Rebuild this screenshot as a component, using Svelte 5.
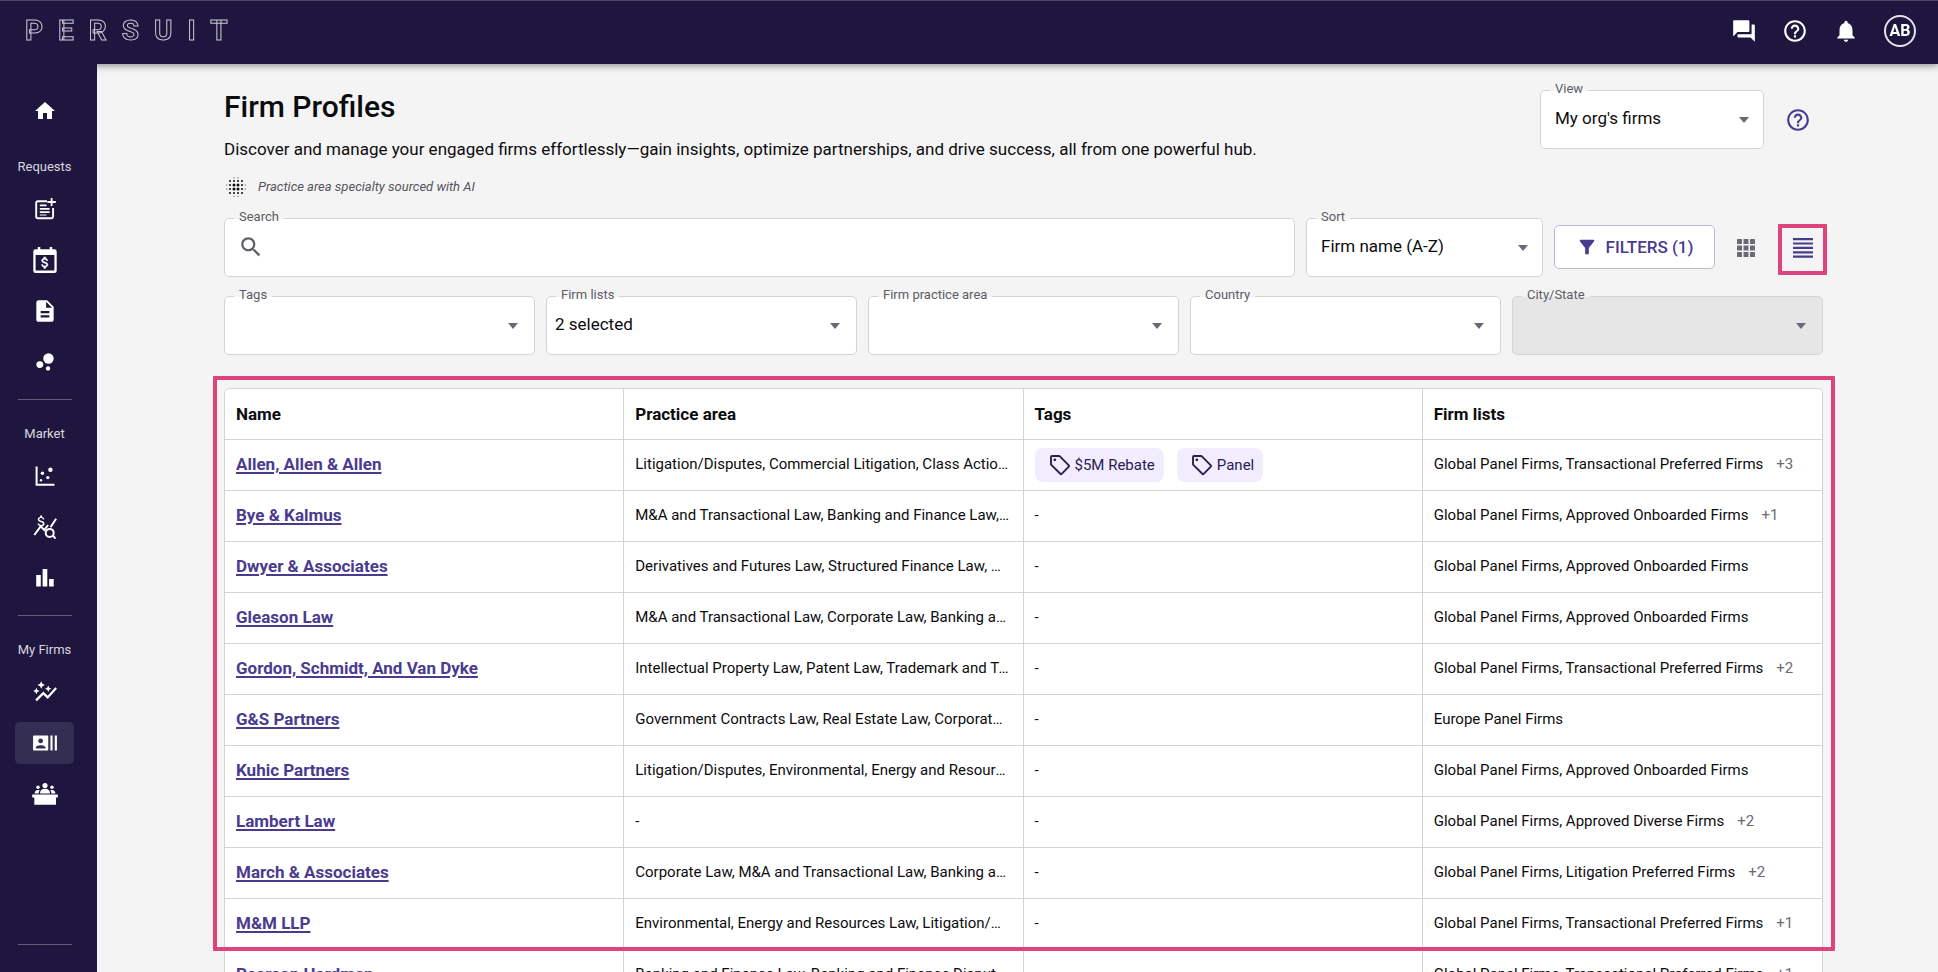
<script>
  const firms = [
    { name: 'Allen, Allen & Allen', areas: 'Litigation/Disputes, Commercial Litigation, Class Actions, Securities Litigation', tags: ['$5M Rebate', 'Panel'], lists: 'Global Panel Firms, Transactional Preferred Firms', more: 3 },
    { name: 'Bye & Kalmus', areas: 'M&A and Transactional Law, Banking and Finance Law, Corporate Law', tags: [], lists: 'Global Panel Firms, Approved Onboarded Firms', more: 1 },
    { name: 'Dwyer & Associates', areas: 'Derivatives and Futures Law, Structured Finance Law, Securities Law', tags: [], lists: 'Global Panel Firms, Approved Onboarded Firms', more: 0 },
    { name: 'Gleason Law', areas: 'M&A and Transactional Law, Corporate Law, Banking and Finance Law', tags: [], lists: 'Global Panel Firms, Approved Onboarded Firms', more: 0 },
    { name: 'Gordon, Schmidt, And Van Dyke', areas: 'Intellectual Property Law, Patent Law, Trademark and Trade Dress Law', tags: [], lists: 'Global Panel Firms, Transactional Preferred Firms', more: 2 },
    { name: 'G&S Partners', areas: 'Government Contracts Law, Real Estate Law, Corporate Law', tags: [], lists: 'Europe Panel Firms', more: 0 },
    { name: 'Kuhic Partners', areas: 'Litigation/Disputes, Environmental, Energy and Resources Law', tags: [], lists: 'Global Panel Firms, Approved Onboarded Firms', more: 0 },
    { name: 'Lambert Law', areas: '-', tags: [], lists: 'Global Panel Firms, Approved Diverse Firms', more: 2 },
    { name: 'March & Associates', areas: 'Corporate Law, M&A and Transactional Law, Banking and Finance Law', tags: [], lists: 'Global Panel Firms, Litigation Preferred Firms', more: 2 },
    { name: 'M&M LLP', areas: 'Environmental, Energy and Resources Law, Litigation/Disputes', tags: [], lists: 'Global Panel Firms, Transactional Preferred Firms', more: 1 },
    { name: 'Pearson Hardman', areas: 'Banking and Finance Law, Banking and Finance Disputes', tags: [], lists: 'Global Panel Firms, Transactional Preferred Firms', more: 1 }
  ];

  // Halftone dots: x, y, radius
  const dots = [6, 10, 14, 18].flatMap((x) =>
    [6, 10, 14, 18].map((y) => {
      const inner = (x === 10 || x === 14) && (y === 10 || y === 14);
      return [x, y, inner ? 1.5 : 1];
    })
  ).concat([[10, 2.8, 0.5], [14, 2.8, 0.5], [10, 21.2, 0.5], [14, 21.2, 0.5], [2.8, 10, 0.5], [2.8, 14, 0.5], [21.2, 10, 0.5], [21.2, 14, 0.5]]);

  const helpPath = 'M11 18h2v-2h-2v2zm1-16C6.48 2 2 6.48 2 12s4.48 10 10 10 10-4.48 10-10S17.52 2 12 2zm0 18c-4.41 0-8-3.59-8-8s3.59-8 8-8 8 3.59 8 8-3.59 8-8 8zm0-14c-2.21 0-4 1.79-4 4h2c0-1.1.9-2 2-2s2 .9 2 2c0 2-3 1.75-3 5h2c0-2.25 3-2.5 3-5 0-2.21-1.79-4-4-4z';
  const moneyPath = 'M11.8 10.9c-2.27-.59-3-1.2-3-2.15 0-1.09 1.01-1.85 2.7-1.85 1.78 0 2.44.85 2.5 2.1h2.21c-.07-1.72-1.12-3.3-3.21-3.81V3h-3v2.16c-1.94.42-3.5 1.68-3.5 3.61 0 2.31 1.91 3.46 4.7 4.13 2.5.6 3 1.48 3 2.41 0 .69-.49 1.79-2.7 1.79-2.06 0-2.87-.92-2.98-2.1h-2.2c.12 2.19 1.76 3.42 3.68 3.83V21h3v-2.15c1.95-.37 3.5-1.5 3.5-3.55 0-2.84-2.43-3.81-4.7-4.4z';
</script>

<div class="shell">
  <header class="topbar">
    <a class="logo" href="#home">PERSUIT</a>
    <div class="top-actions">
      <button class="icon-btn" aria-label="Messages">
        <svg viewBox="0 0 24 24"><path d="M21 6h-2v9H6v2c0 .55.45 1 1 1h11l4 4V7c0-.55-.45-1-1-1zm-4 6V3c0-.55-.45-1-1-1H3c-.55 0-1 .45-1 1v14l4-4h10c.55 0 1-.45 1-1z" /></svg>
      </button>
      <button class="icon-btn" aria-label="Help"><svg viewBox="0 0 24 24"><path d={helpPath} /></svg></button>
      <button class="icon-btn" aria-label="Notifications">
        <svg viewBox="0 0 24 24"><path d="M12 22c1.1 0 2-.9 2-2h-4c0 1.1.89 2 2 2zm6-6v-5c0-3.07-1.64-5.64-4.5-6.32V4c0-.83-.67-1.5-1.5-1.5s-1.5.67-1.5 1.5v.68C7.63 5.36 6 7.92 6 11v5l-2 2v1h16v-1l-2-2z" /></svg>
      </button>
      <button class="avatar">AB</button>
    </div>
  </header>

  <div class="body">
    <nav class="sidebar">
      <a href="#home" aria-label="Home"><svg class="small" viewBox="0 0 24 24"><path d="M10 20v-6h4v6h5v-8h3L12 3 2 12h3v8z" /></svg></a>

      <div class="nav-label first">Requests</div>
      <a href="#new" aria-label="New request">
        <svg viewBox="0 0 26 26">
          <path d="M15 5.200H6a1.800 1.800 0 0 0-1.800 1.800v13.500a1.800 1.800 0 0 0 1.800 1.800h13.300a1.800 1.800 0 0 0 1.800-1.800V12" fill="none" stroke="#fff" stroke-width="1.900" />
          <path d="M7.800 8.500h6.700v1.800H7.800zM7.800 12h9.800v1.800H7.800zM7.800 15.300h9.800v1.800H7.800zM18.700 2h1.800v3.100h3.300v1.800h-3.300V10h-1.800V6.900h-3.300V5.100h3.300zM7.800 18.400h6.700v1h-6.700z" />
        </svg>
      </a>
      <a href="#calendar" aria-label="Calendar">
        <svg viewBox="0 0 26 26">
          <path fill-rule="evenodd" d="M5.800 0h2.500v2.200h9.400V0h2.500v2.200h2.300a2.200 2.200 0 0 1 2.200 2.200v19.300a2.200 2.200 0 0 1-2.200 2.200H3.500a2.200 2.200 0 0 1-2.200-2.200V4.400a2.200 2.200 0 0 1 2.200-2.200h2.300zM3.600 8v15.600h18.800V8z" />
          <g transform="translate(5.400 8) scale(.64)"><path d={moneyPath} stroke="#fff" stroke-width=".6" /></g>
        </svg>
      </a>
      <a href="#documents" aria-label="Documents"><svg viewBox="0 0 24 24"><path d="M14 2H6c-1.100 0-1.990.9-1.990 2L4 20c0 1.100.89 2 1.990 2H18c1.100 0 2-.9 2-2V8l-6-6zm2 16H8v-2h8v2zm0-4H8v-2h8v2zm-3-5V3.500L18.500 9H13z" /></svg></a>
      <a href="#bubbles" aria-label="Bubbles"><svg viewBox="0 0 24 24"><circle cx="7.200" cy="14.400" r="3.200" /><circle cx="14.800" cy="18" r="2" /><circle cx="15.200" cy="8.800" r="4.800" /></svg></a>

      <hr />
      <div class="nav-label">Market</div>
      <a href="#scatter" aria-label="Scatter">
        <svg viewBox="0 0 26 26"><path d="M3.600 3.500h2v17.300h16.900v2H3.600z" /><circle cx="18.400" cy="6.700" r="2.200" /><circle cx="10.400" cy="10.300" r="1.700" /><circle cx="15.800" cy="14.600" r="1.700" /><circle cx="9" cy="17.300" r="1.200" /></svg>
      </a>
      <a href="#rates" aria-label="Rates">
        <svg viewBox="0 0 26 26">
          <g transform="translate(1.300 -.6) scale(.68)"><path d={moneyPath} /></g>
          <path d="M2.300 21 8.700 12.400l3.500 3.600 3.900-5M18.500 13.300l5.600-8.600M21 21.600l2.500 3" fill="none" stroke="#fff" stroke-width="2" />
          <circle cx="17.700" cy="18.900" r="4" fill="none" stroke="#fff" stroke-width="2" />
        </svg>
      </a>
      <a href="#charts" aria-label="Charts"><svg viewBox="0 0 26 26"><path d="M4.200 10h4.600v11.600H4.200zM10.600 4h4.700v17.600h-4.700zM17.100 14h4.600v7.600h-4.600z" /></svg></a>

      <hr />
      <div class="nav-label">My Firms</div>
      <a href="#insights" aria-label="Insights"><svg viewBox="0 0 24 24"><path d="M14.060 9.940 12 9l2.060-.94L15 6l.94 2.060L18 9l-2.060.94L15 12l-.94-2.060zM4 14l.94-2.060L7 11l-2.060-.94L4 8l-.94 2.060L1 11l2.060.94L4 14zm4.500-5 1.090-2.410L12 5.500 9.590 4.410 8.500 2 7.410 4.410 5 5.500l2.410 1.090L8.500 9zm-4 11.500 6-6.010 4 4L23 8.930l-1.410-1.410-7.090 7.970-4-4L3 19l1.500 1.500z" /></svg></a>
      <a href="#profiles" class="active" aria-label="Firm profiles" aria-current="page"><svg viewBox="0 0 24 24"><path d="M21 5v14h2V5h-2zm-4 14h2V5h-2v14zM14 5H2c-.55 0-1 .45-1 1v12c0 .55.45 1 1 1h12c.55 0 1-.45 1-1V6c0-.55-.45-1-1-1zM8 7.750c1.240 0 2.250 1.010 2.250 2.250S9.240 12.250 8 12.250 5.750 11.240 5.750 10 6.760 7.750 8 7.750zM12.500 17h-9v-.75c0-1.500 3-2.250 4.500-2.250s4.500.75 4.500 2.250V17z" /></svg></a>
      <a href="#panels" aria-label="Panels">
        <svg viewBox="0 0 26 26">
          <path d="M.2 13.500h25.600v3H24v7.300H2.300v-7.300H.2z" />
          <circle cx="13" cy="4.500" r="2.600" /><circle cx="6" cy="6.300" r="1.700" /><circle cx="20" cy="6.300" r="1.700" />
          <path d="M8 12.500c0-3 1.800-4.700 5-4.700s5 1.700 5 4.700zM2.600 12.500c.1-2.300 1.300-3.600 3.400-3.600.7 0 1.300.1 1.700.4-.7.900-1 1.900-1 3.200zM23.400 12.500c-.1-2.300-1.300-3.600-3.400-3.600-.7 0-1.300.1-1.700.4.7.9 1 1.900 1 3.200z" />
        </svg>
      </a>
      <hr class="last" />
    </nav>

    <main>
      <div class="page-head">
        <div class="titles">
          <h1>Firm Profiles</h1>
          <p class="lead">Discover and manage your engaged firms effortlessly—gain insights, optimize partnerships, and drive success, all from one powerful hub.</p>
          <p class="ai-note">
            <svg viewBox="0 0 24 24" aria-hidden="true">{#each dots as [x, y, r]}<circle cx={x} cy={y} {r} />{/each}</svg>
            <em>Practice area specialty sourced with AI</em>
          </p>
        </div>
        <div class="view">
          <div class="field standard">
            <label for="view">View</label>
            <select id="view"><option>My org's firms</option></select>
          </div>
          <button class="icon-btn purple" aria-label="About views"><svg viewBox="0 0 24 24"><path d={helpPath} /></svg></button>
        </div>
      </div>

      <div class="toolbar">
        <div class="field search">
          <label for="search">Search</label>
          <svg viewBox="0 0 24 24" aria-hidden="true"><path d="M15.500 14h-.79l-.28-.27C15.410 12.590 16 11.110 16 9.500 16 5.910 13.090 3 9.500 3S3 5.910 3 9.500 5.910 16 9.500 16c1.610 0 3.090-.59 4.230-1.570l.27.28v.79l5 4.990L20.490 19l-4.990-5zm-6 0C7.010 14 5 11.990 5 9.500S7.010 5 9.500 5 14 7.010 14 9.500 11.990 14 9.500 14z" /></svg>
          <input id="search" type="text" />
        </div>
        <div class="field standard sort">
          <label for="sort">Sort</label>
          <select id="sort"><option>Firm name (A-Z)</option></select>
        </div>
        <button class="filters">
          <svg viewBox="0 0 24 24" aria-hidden="true"><path d="M4.250 5.610C6.270 8.200 10 13 10 13v6c0 .55.45 1 1 1h2c.55 0 1-.45 1-1v-6s3.720-4.800 5.740-7.390C20.250 4.950 19.780 4 18.950 4H5.040c-.83 0-1.300.95-.79 1.610z" /></svg>
          FILTERS (1)
        </button>
        <div class="toggles">
          <button aria-label="Grid view">
            <svg class="grid" viewBox="0 0 18 18">
              {#each [0, 6.5, 13] as x}{#each [0, 6.5, 13] as y}<rect {x} {y} width="5" height="5" rx=".5" />{/each}{/each}
            </svg>
          </button>
          <button class="on" aria-label="List view" aria-pressed="true">
            <svg class="list" viewBox="0 0 20 20"><path d="M0 0h20v2.200H0zM0 4.400h20v2.200H0zM0 8.800h20v2.200H0zM0 13.200h20v2.200H0zM0 17.600h20v2.200H0z" /></svg>
            <span class="mark"></span>
          </button>
        </div>
      </div>

      <div class="filter-row">
        <div class="field"><label for="tags">Tags</label><select id="tags"><option></option></select></div>
        <div class="field tight"><label for="lists">Firm lists</label><select id="lists"><option>2 selected</option></select></div>
        <div class="field"><label for="area">Firm practice area</label><select id="area"><option></option></select></div>
        <div class="field"><label for="country">Country</label><select id="country"><option></option></select></div>
        <div class="field disabled"><label for="city">City/State</label><select id="city" disabled><option></option></select></div>
      </div>

      <div class="table-wrap">
        <table>
          <thead>
            <tr><th>Name</th><th>Practice area</th><th>Tags</th><th>Firm lists</th></tr>
          </thead>
          <tbody>
            {#each firms as firm}
              <tr>
                <td><a href="#firm">{firm.name}</a></td>
                <td>{firm.areas}</td>
                <td>
                  {#if firm.tags.length}
                    <div class="chips">
                      {#each firm.tags as tag}
                        <span class="chip">
                          <svg viewBox="0 0 24 24" aria-hidden="true"><path d="M3 4a1 1 0 0 1 1-1h7.200a1 1 0 0 1 .7.300l8.900 9a1 1 0 0 1 0 1.400l-7.100 7.100a1 1 0 0 1-1.400 0l-9-8.900a1 1 0 0 1-.3-.7z" fill="none" stroke="currentColor" stroke-width="1.900" /><circle cx="6.800" cy="6.800" r="1.400" /></svg>
                          {tag}
                        </span>
                      {/each}
                    </div>
                  {:else}-{/if}
                </td>
                <td>{firm.lists}{#if firm.more}<span class="more">+{firm.more}</span>{/if}</td>
              </tr>
            {/each}
          </tbody>
        </table>
        <div class="mark rows"></div>
      </div>
    </main>
  </div>
</div>

<style>
  :global(body) {
    background: #f4f4f4;
  }
  .shell {
    height: 100vh;
    display: flex;
    flex-direction: column;
    overflow: hidden;
    font-family: Roboto, "Liberation Sans", sans-serif;
    font-size: 17px;
    color: #0c0c0e;
    --ink: #1e163e;
    --purple: #4a3b8f;
    --line: #d4d4d6;
    --gap: 11px;
  }
  .shell *,
  .shell *::before,
  .shell *::after {
    box-sizing: border-box;
  }
  button {
    font: inherit;
    border: 0;
    padding: 0;
    background: none;
    color: inherit;
    cursor: pointer;
  }
  svg {
    display: block;
    width: 26px;
    height: 26px;
    flex: none;
    fill: currentColor;
  }

  .topbar {
    position: relative;
    z-index: 2;
    flex: none;
    height: 64px;
    display: flex;
    align-items: center;
    justify-content: space-between;
    padding: 0 22px 4px 25px;
    background: var(--ink);
    border-top: 1px solid #4b4662;
    color: #fff;
    box-shadow: 0 2px 7px rgba(0, 0, 0, 0.4);
  }
  .logo {
    font-size: 28px;
    line-height: 32px;
    font-weight: 700;
    letter-spacing: 15px;
    color: var(--ink);
    -webkit-text-stroke: 1px #c6c3d2;
    text-decoration: none;
  }
  .top-actions {
    display: flex;
    align-items: center;
    gap: 25px;
  }
  .avatar {
    width: 32px;
    height: 32px;
    border: 2px solid #e4e2ea;
    border-radius: 50%;
    font-size: 16px;
    font-weight: 700;
    line-height: 28px;
    text-align: center;
  }

  .body {
    flex: 1;
    min-height: 0;
    display: flex;
  }
  .sidebar {
    position: relative;
    z-index: 3;
    flex: none;
    width: 97px;
    display: flex;
    flex-direction: column;
    padding: 26px 23px 27px 15px;
    background: var(--ink);
    color: #fff;
  }
  .sidebar a {
    flex: none;
    height: 42px;
    display: flex;
    align-items: center;
    justify-content: center;
    border-radius: 5px;
    color: #fff;
  }
  .sidebar a + a {
    margin-top: 9px;
  }
  .sidebar a.active {
    background: #352e53;
  }
  .sidebar svg.small {
    width: 24px;
    height: 24px;
  }
  .nav-label {
    margin-bottom: 13px;
    font-size: 13px;
    line-height: 16px;
    text-align: center;
    white-space: nowrap;
    color: #d8d6df;
  }
  .nav-label.first {
    margin-top: 27px;
  }
  .sidebar hr {
    width: 54px;
    height: 1px;
    flex: none;
    margin: 16px auto 26px;
    border: 0;
    background: #625d76;
  }
  .sidebar hr.last {
    margin-top: auto;
    margin-bottom: 0;
  }

  main {
    flex: 1;
    min-width: 0;
    padding: 25px 115px 0 127px;
    overflow-y: auto;
    scrollbar-width: none;
    background: #f4f4f4;
  }
  .page-head {
    display: flex;
    justify-content: space-between;
    align-items: flex-start;
    margin-bottom: 19px;
  }
  h1 {
    margin: 0 0 12px;
    font-size: 30px;
    line-height: 36px;
    font-weight: 500;
  }
  .lead {
    margin: 0 0 14px;
    line-height: 24px;
  }
  .ai-note {
    margin: 0;
    display: flex;
    align-items: center;
    gap: 10px;
    font-size: 13px;
    line-height: 24px;
    color: #55555c;
  }
  .ai-note svg {
    width: 24px;
    height: 24px;
    color: #0c0c0e;
  }
  .view {
    display: flex;
    align-items: center;
    gap: 21px;
    padding: 1px 12px 0 0;
  }
  .view .field {
    width: 224px;
  }
  .purple {
    color: var(--purple);
  }

  .field {
    --fill: #fff;
    --arrow-inset: 16px;
    position: relative;
    height: 59px;
    display: flex;
    align-items: center;
    border: 1px solid var(--line);
    border-radius: 5px;
    background: var(--fill);
  }
  .field label {
    position: absolute;
    top: -10px;
    left: 9px;
    padding: 0 5px;
    font-size: 13px;
    line-height: 16px;
    color: #5d5d66;
    background: linear-gradient(#f4f4f4 10px, var(--fill) 10px);
  }
  .field select,
  .field input {
    appearance: none;
    width: 100%;
    height: 100%;
    padding: 0 14px;
    border: 0;
    border-radius: 5px;
    outline: 0;
    background: transparent;
    font: inherit;
    color: inherit;
  }
  .field select {
    padding-bottom: 3px;
  }
  .field.tight select {
    padding-left: 8px;
  }
  .field.standard {
    --arrow-inset: 14px;
  }
  .field:not(.search)::after {
    content: "";
    position: absolute;
    right: var(--arrow-inset);
    top: 26px;
    border: 5px solid transparent;
    border-top: 6px solid #6a6a76;
    border-bottom: 0;
    pointer-events: none;
  }
  .field.disabled {
    --fill: #e6e6e6;
  }
  .field.search {
    flex: 1;
    padding: 0 0 2px 13px;
    color: #5d5d66;
  }
  .toolbar {
    display: flex;
    align-items: center;
    gap: var(--gap);
    margin-bottom: 19px;
  }
  .sort {
    width: 237px;
  }
  .filters {
    width: 161px;
    height: 44px;
    display: flex;
    align-items: center;
    justify-content: center;
    gap: 8px;
    margin-bottom: 2px;
    border: 1px solid #bdb7dc;
    border-radius: 5px;
    background: #fff;
    color: var(--purple);
    font-weight: 500;
  }
  .filters svg {
    width: 22px;
    height: 22px;
  }
  .toggles {
    display: flex;
    gap: 17px;
  }
  .toggles button {
    position: relative;
    width: 40px;
    height: 44px;
    display: grid;
    place-items: center;
    color: #6a6a76;
  }
  .toggles button.on {
    color: var(--purple);
  }
  .toggles svg.grid {
    width: 18px;
    height: 18px;
  }
  .toggles svg.list {
    width: 20px;
    height: 20px;
  }
  .mark {
    position: absolute;
    inset: -2px -4px -5px -5px;
    border: 4px solid #dc447e;
    border-radius: 1px;
    pointer-events: none;
  }

  .filter-row {
    display: grid;
    grid-template-columns: repeat(5, 1fr);
    gap: var(--gap);
    margin-bottom: 33px;
  }

  .table-wrap {
    position: relative;
  }
  .mark.rows {
    inset: -12px -12px auto -11px;
    height: 575px;
  }
  table {
    width: 100%;
    table-layout: fixed;
    border-collapse: separate;
    border-spacing: 0;
    border: 1px solid var(--line);
    border-radius: 5px;
    background: #fff;
  }
  th,
  td {
    height: 51px;
    padding: 0 13px 0 11px;
    border-bottom: 1px solid var(--line);
    border-right: 1px solid var(--line);
    text-align: left;
    overflow: hidden;
    text-overflow: ellipsis;
    white-space: nowrap;
  }
  th:last-child,
  td:last-child {
    border-right: 0;
  }
  th {
    font-size: 17px;
    font-weight: 700;
  }
  td {
    padding-bottom: 2px;
    font-size: 15px;
  }
  td a {
    font-size: 17px;
    font-weight: 700;
    color: var(--purple);
    text-decoration-thickness: 2px;
    text-underline-offset: 2px;
  }
  .chips {
    display: flex;
    gap: 13px;
    padding-top: 2px;
  }
  .chip {
    height: 34px;
    display: flex;
    align-items: center;
    gap: 3px;
    padding: 0 9px 0 13px;
    border-radius: 8px;
    background: #f1edfe;
    color: #2a2050;
  }
  .chip svg {
    width: 24px;
    height: 24px;
  }
  .more {
    margin-left: 13px;
    color: #6a6a76;
  }
</style>
